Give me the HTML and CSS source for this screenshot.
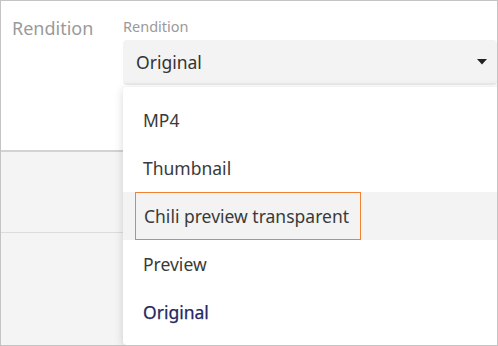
FILE: index.html
```html
<!DOCTYPE html>
<html>
<head>
<meta charset="utf-8">
<link rel="stylesheet" href="styles.css">
</head>
<body>
<div class="frame">
  <div class="top">
    <div class="row-label">Rendition</div>
    <div class="field">
      <div class="field-label">Rendition</div>
      <div class="select">
        <span class="select-value">Original</span>
        <svg class="caret" width="10" height="6" viewBox="0 0 10 6"><path d="M0 0h10L5 5.5z" fill="#222"/></svg>
      </div>
    </div>
  </div>
  <div class="band"></div>
  <div class="rest"></div>
  <ul class="menu">
    <li class="item">MP4</li>
    <li class="item">Thumbnail</li>
    <li class="item hover"><span class="focus">Chili preview transparent</span></li>
    <li class="item">Preview</li>
    <li class="item selected">Original</li>
  </ul>
</div>
</body>
</html>
```

FILE: styles.css
```css
* { box-sizing: border-box; }
html, body { margin: 0; padding: 0; background: #fff; }
body { font-family: "Noto Sans", "Open Sans", sans-serif; }
.frame {
  position: relative;
  width: 498px;
  height: 346px;
  border: 1px solid #c4c4c4;
  overflow: hidden;
  background: #f4f4f4;
  display: flex;
  flex-direction: column;
}
.top {
  height: 151px;
  background: #fff;
  border-bottom: 2px solid #d2d2d2;
  display: flex;
  padding-top: 14px;
}
.row-label {
  width: 122px;
  padding-left: 11px;
  font-size: 18px;
  color: #9a9a9a;
  line-height: 26px;
}
.field { flex: 1; display: flex; flex-direction: column; }
.field-label {
  font-size: 14.5px;
  color: #9a9a9a;
  line-height: 20px;
  margin-top: 1px;
  margin-bottom: 4px;
}
.select {
  height: 45px;
  background: #f3f3f3;
  border-radius: 4px;
  border-bottom: 2px solid #ebebeb;
  display: flex;
  align-items: center;
  justify-content: space-between;
  padding: 0 10px 0 13px;
}
.select-value { font-size: 17.5px; color: #333; margin-top: 1px; }
.caret { display: block; margin-top: 1px; }
.band {
  height: 81px;
  border-bottom: 1px solid #dcdcdc;
}
.rest { flex: 1; }
.menu {
  position: absolute;
  left: 122px;
  top: 86px;
  width: 380px;
  height: 258px;
  margin: 0;
  padding: 9px 0;
  list-style: none;
  background: #fff;
  border-radius: 4px;
  box-shadow: 0 2px 10px rgba(0,0,0,0.16);
}
.item {
  height: 48px;
  display: flex;
  align-items: center;
  padding-left: 20px;
  font-size: 17.5px;
  color: #3a3a3a;
}
.item.hover { background: #f3f3f3; padding-left: 12px; }
.focus {
  display: flex;
  align-items: center;
  height: 48px;
  padding: 0 11px 0 8px;
  border: 1px solid #f08232;
}
.item.selected { color: #23285f; -webkit-text-stroke: 0.25px #23285f; }
```
